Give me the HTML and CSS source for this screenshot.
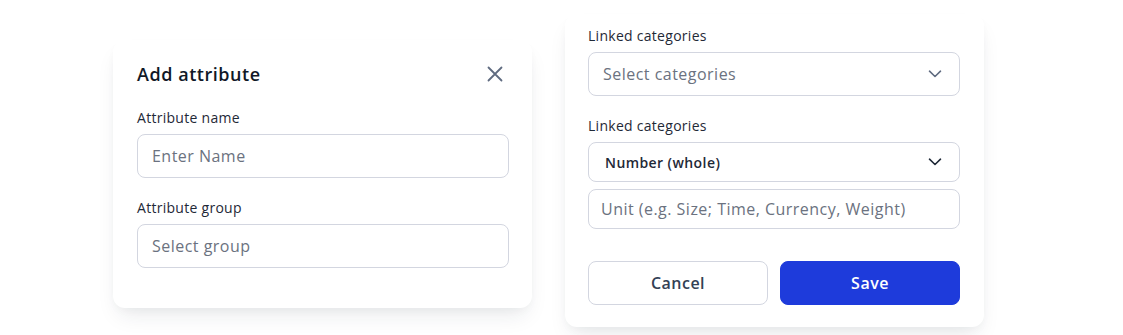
FILE: index.html
```html
<!DOCTYPE html>
<html>
<head>
<meta charset="utf-8">
<link rel="stylesheet" href="styles.css">
</head>
<body>
<div class="stage">
  <div class="card card-left">
    <div class="head">
      <h2 class="title">Add attribute</h2>
      <svg class="close" width="16" height="16" viewBox="0 0 16 16"><path d="M1.5 1.5 L14.5 14.5 M14.5 1.5 L1.5 14.5" stroke="#5f6b80" stroke-width="1.8" stroke-linecap="round" fill="none"/></svg>
    </div>
    <div class="field f1">
      <div class="label">Attribute name</div>
      <div class="input h44"><span class="ph">Enter Name</span></div>
    </div>
    <div class="field f2">
      <div class="label">Attribute group</div>
      <div class="input h44"><span class="ph">Select group</span></div>
    </div>
  </div>
  <div class="card card-right">
    <div class="field">
      <div class="label">Linked categories</div>
      <div class="input h44 sel"><span class="ph">Select categories</span>
        <svg class="chev" width="14" height="8" viewBox="0 0 14 8"><path d="M1.5 1.2 L7 6.5 L12.5 1.2" stroke="#5f6b80" stroke-width="1.6" stroke-linecap="round" stroke-linejoin="round" fill="none"/></svg>
      </div>
    </div>
    <div class="field f2">
      <div class="label">Linked categories</div>
      <div class="input h40 sel val"><span class="value">Number (whole)</span>
        <svg class="chev" width="14" height="8" viewBox="0 0 14 8"><path d="M1.5 1.2 L7 6.5 L12.5 1.2" stroke="#1f2937" stroke-width="1.6" stroke-linecap="round" stroke-linejoin="round" fill="none"/></svg>
      </div>
      <div class="input h40 unit"><span class="ph">Unit (e.g. Size; Time, Currency, Weight)</span></div>
    </div>
    <div class="actions">
      <button class="btn cancel">Cancel</button>
      <button class="btn save">Save</button>
    </div>
  </div>
</div>
</body>
</html>
```
FILE: styles.css
```css
* { box-sizing: border-box; }
html, body { margin: 0; padding: 0; background: #ffffff; }
body {
  font-family: "Open Sans", "Noto Sans", sans-serif;
  width: 1123px;
  height: 335px;
  overflow: hidden;
}
.stage {
  display: flex;
  align-items: flex-start;
  gap: 33px;
  padding-left: 113px;
}
.card {
  background: #fff;
  border-radius: 12px;
  width: 419px;
  box-shadow: 0 12px 22px -6px rgba(30, 41, 59, 0.10), 0 4px 10px -2px rgba(30, 41, 59, 0.04);
}
.card-left {
  margin-top: 40px;
  padding: 21px 23px 40px 24px;
}
.card-right {
  margin-top: 14px;
  padding: 12px 24px 22px 23px;
}
.head {
  display: flex;
  align-items: center;
  justify-content: space-between;
  height: 26px;
}
.title {
  margin: 0;
  font-size: 18px;
  font-weight: 600;
  color: #111827;
  line-height: 26px;
  letter-spacing: 0.03em;
}
.close { margin-right: 6px; }
.field { display: flex; flex-direction: column; }
.f1 { margin-top: 21px; }
.f2 { margin-top: 20px; }
.label {
  font-size: 14px;
  font-weight: 500;
  line-height: 20px;
  color: #1f2937;
  margin-bottom: 6px;
  letter-spacing: 0.02em;
}
.input {
  border: 1px solid #d3d6e0;
  border-radius: 8px;
  display: flex;
  align-items: center;
  padding: 0 14px;
  background: #fff;
}
.h44 { height: 44px; }
.h40 { height: 40px; }
.ph {
  font-size: 16px;
  color: #6b7280;
  letter-spacing: 0.03em;
}
.sel { justify-content: space-between; padding-right: 17px; }
.val { padding-left: 16px; }
.value {
  font-size: 14px;
  font-weight: 600;
  color: #1f2937;
  letter-spacing: 0.03em;
}
.unit { margin-top: 7px; padding-left: 12px; }
.actions {
  display: flex;
  gap: 12px;
  margin-top: 32px;
}
.btn {
  flex: 1;
  height: 44px;
  border-radius: 8px;
  font-family: inherit;
  font-size: 16px;
  font-weight: 600;
  letter-spacing: 0.03em;
  cursor: pointer;
}
.cancel {
  background: #fff;
  border: 1px solid #d3d6e0;
  color: #334155;
}
.save {
  background: #1e3bdb;
  border: 1px solid #1e3bdb;
  color: #fff;
}
```
